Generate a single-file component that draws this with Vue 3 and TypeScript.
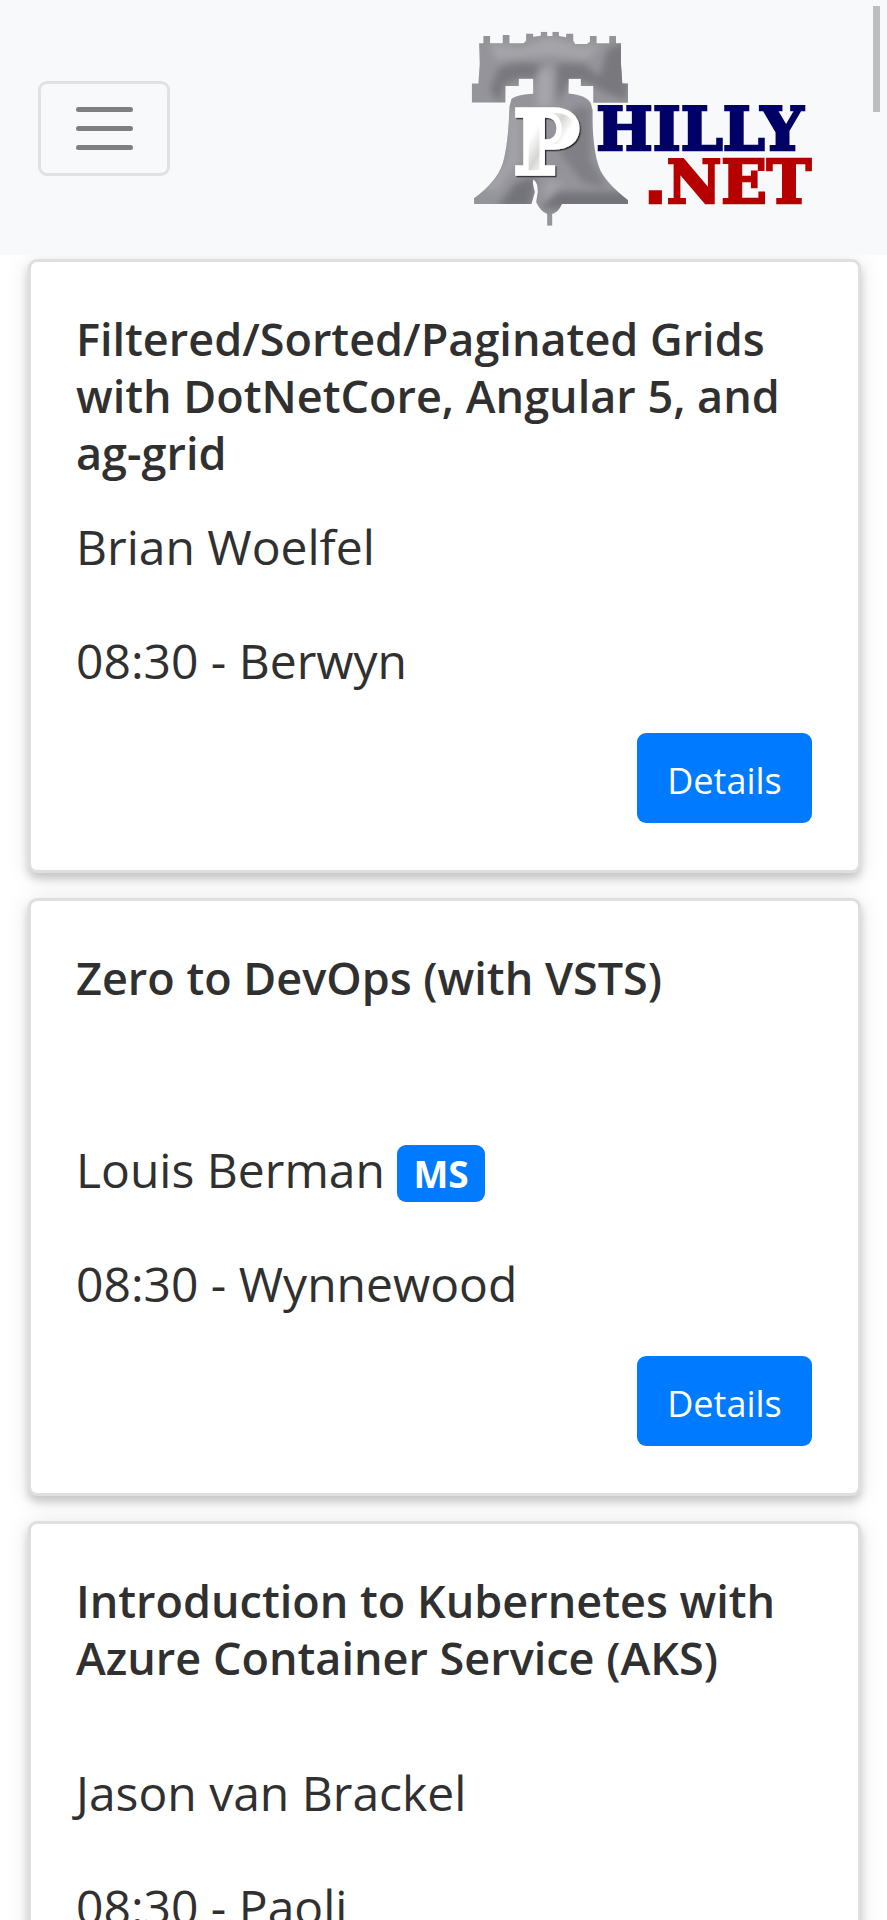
<script setup lang="ts">
interface Session {
  id: number
  title: string
  speaker: string
  microsoft: boolean
  time: string
  location: string
}

const sessions: Session[] = [
  {
    id: 1,
    title: 'Filtered/Sorted/Paginated Grids with DotNetCore, Angular 5, and ag-grid',
    speaker: 'Brian Woelfel',
    microsoft: false,
    time: '08:30',
    location: 'Berwyn',
  },
  {
    id: 2,
    title: 'Zero to DevOps (with VSTS)',
    speaker: 'Louis Berman',
    microsoft: true,
    time: '08:30',
    location: 'Wynnewood',
  },
  {
    id: 3,
    title: 'Introduction to Kubernetes with Azure Container Service (AKS)',
    speaker: 'Jason van Brackel',
    microsoft: false,
    time: '08:30',
    location: 'Paoli',
  },
]
</script>

<template>
  <div class="page">
    <header class="navbar">
      <button class="toggler" type="button" aria-label="Toggle navigation">
        <svg class="bars" viewBox="0 0 57 43" aria-hidden="true">
          <path d="M2.5 2.5H54.5M2.5 21.5H54.5M2.5 40.5H54.5" />
        </svg>
      </button>
      <a class="brand" href="#" aria-label="Philly .NET">
        <svg class="logo" viewBox="90 90 1030 590">
          <defs>
            <clipPath id="bell-clip">
              <path
                d="M117 130H130V108H150V130H188V105H208V130H250L258 122V101H279V110L302 107V95H321V108H337V95H356V108L378 112V101H399V122L405 132H440L449 125V108H469V130H507V108H527V130H542V190L546 250H563V308H459V258H422V236H385V280Q440 285 452 310L457 330Q455 450 480 510Q500 550 563 600V611H365Q355 635 336 641V676H321V641Q300 632 288 605L293 575Q293 545 280 538Q275 545 284 575L274 611H102V594Q170 545 188 490Q205 430 208 320L214 296Q235 283 279 281V236H236V258H196V307H95V250H115L119 190Z"
              />
            </clipPath>
            <linearGradient id="letter-fill" x1="0" y1="0" x2="1" y2="1">
              <stop offset="0.35" stop-color="#ffffff" />
              <stop offset="0.5" stop-color="#d6d6d4" />
              <stop offset="0.62" stop-color="#ffffff" />
            </linearGradient>
            <filter id="soften" x="-30%" y="-30%" width="160%" height="160%">
              <feGaussianBlur stdDeviation="11" />
            </filter>
            <filter id="letter-shade" x="-10%" y="-10%" width="120%" height="120%">
              <feDropShadow dx="4" dy="4" stdDeviation="2" flood-color="#2c2c30" />
            </filter>
          </defs>
          <g clip-path="url(#bell-clip)">
            <path fill="#95949a" d="M90 90H570V680H90Z" />
            <g filter="url(#soften)">
              <path fill="#79787e" d="M175 205Q230 175 305 195L285 235H235L190 255L180 310L150 270Z" />
              <path fill="#79787e" d="M350 190H430L480 230L500 150L560 120V300L500 280L440 245H385L350 310Z" />
              <path fill="#a5a4a9" d="M150 130L240 145L330 110L420 140L480 135L440 180L330 165L170 180Z" />
              <path fill="#a6a5aa" d="M295 210H335V320H290Z" />
              <path fill="#807f85" d="M400 320H450V480L500 560L430 550L360 460Z" />
              <path fill="#74737a" d="M230 545L290 530L270 620H170Z" />
              <path fill="#74737a" d="M350 575H580V625H320L300 620Z" />
              <path fill="#a3a2a7" d="M320 540L370 545L310 610Z" />
              <path fill="#a3a2a7" d="M205 330H240V480L170 570H120L200 480Z" />
            </g>
          </g>
          <text class="logo-initial" x="221" y="518" filter="url(#letter-shade)">P</text>
          <text class="logo-word logo-navy" x="468" y="449">HILLY</text>
          <text class="logo-word logo-red" x="1112" y="609" text-anchor="end"><tspan class="logo-dot">.</tspan>NET</text>
        </svg>
      </a>
    </header>

    <main class="sessions">
      <article v-for="session in sessions" :key="session.id" class="card">
        <h2 class="title">{{ session.title }}</h2>
        <p class="line">
          {{ session.speaker }}
          <span v-if="session.microsoft" class="badge">MS</span>
        </p>
        <p class="line slot">{{ session.time }} - {{ session.location }}</p>
        <button class="details" type="button">Details</button>
      </article>
    </main>

    <div class="scroll-thumb" aria-hidden="true"></div>
  </div>
</template>

<style>
body {
  background: #fff;
}
</style>

<style scoped>
.page {
  height: 100vh;
  overflow-y: auto;
  scrollbar-width: none;
  color: #303030;
  font-family: 'Segoe UI', 'Open Sans', 'Noto Sans', sans-serif;
}

.navbar {
  position: relative;
  z-index: 1;
  display: flex;
  align-items: center;
  justify-content: space-between;
  padding: 30px 73px 28px 38px;
  background: #f8f9fb;
}

.toggler {
  display: flex;
  align-items: center;
  justify-content: center;
  width: 132px;
  height: 95px;
  padding: 0;
  border: 3px solid #e0e1e3;
  border-radius: 9px;
  background: transparent;
}

.bars {
  width: 57px;
  height: 43px;
  fill: none;
  stroke: #7f7f7f;
  stroke-width: 5;
  stroke-linecap: round;
}

.brand {
  display: block;
}

.logo {
  display: block;
  width: 344px;
  height: 197px;
}

.logo-initial,
.logo-word {
  font-family: 'DejaVu Serif', serif;
  font-weight: 700;
}

.logo-initial {
  font-size: 260px;
  fill: url(#letter-fill);
  stroke: #fff;
  stroke-width: 16;
}

.logo-word {
  font-size: 179px;
  stroke-width: 8;
}

.logo-dot {
  font-family: 'DejaVu Sans', sans-serif;
}

.logo-navy {
  fill: #000066;
  stroke: #000066;
}

.logo-red {
  fill: #b60000;
  stroke: #b60000;
}

.sessions {
  display: flex;
  flex-direction: column;
  gap: 25px;
  padding: 4px 26px 25px 28px;
}

.card {
  display: flex;
  flex-direction: column;
  padding: 48px 46px 47px 45px;
  border: 3px solid #dfdfdf;
  border-radius: 9px;
  background: #fff;
  box-shadow: 0 6px 9px rgba(0, 0, 0, 0.18), 0 2px 24px rgba(0, 0, 0, 0.1);
}

.title {
  min-height: 155px;
  margin: 0 0 28px;
  font-size: 45px;
  font-weight: 600;
  line-height: 57px;
}

.line {
  margin: 0 0 38px;
  font-size: 48px;
  line-height: 76px;
}

.slot {
  margin-bottom: 34px;
}

.badge {
  display: inline-block;
  padding: 0 16px;
  border-radius: 9px;
  background: #007bff;
  color: #fff;
  font-size: 37px;
  font-weight: 700;
  line-height: 57px;
}

.details {
  align-self: flex-end;
  width: 175px;
  height: 90px;
  padding: 4px 0 0;
  border: 0;
  border-radius: 9px;
  background: #007bff;
  color: #fff;
  font-family: inherit;
  font-size: 36px;
}

.scroll-thumb {
  position: fixed;
  z-index: 2;
  top: 6px;
  right: 7px;
  width: 7px;
  height: 106px;
  background: #bdbdbd;
}
</style>
